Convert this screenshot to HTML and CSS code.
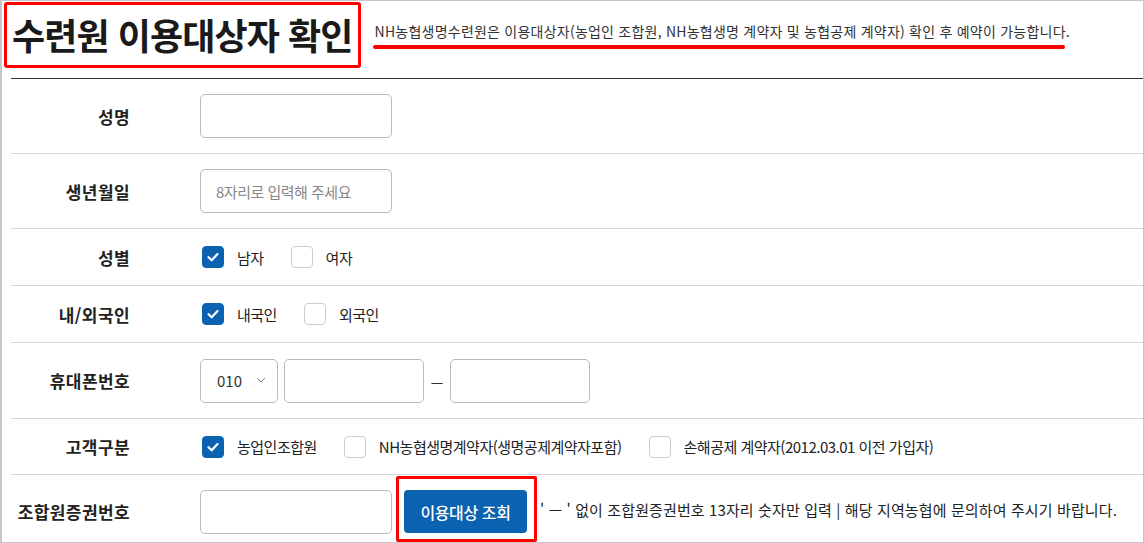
FILE: index.html
```html
<!DOCTYPE html>
<html lang="ko">
<head>
<meta charset="utf-8">
<title>수련원 이용대상자 확인</title>
<link rel="stylesheet" href="styles.css">
</head>
<body>
<div class="page">
  <header class="head">
    <h1 class="title">수련원 이용대상자 확인</h1>
    <div class="desc">
      <p class="desc-text">NH농협생명수련원은 이용대상자(농업인 조합원, NH농협생명 계약자 및 농협공제 계약자) 확인 후 예약이 가능합니다.</p>
      <div class="desc-line"></div>
    </div>
  </header>

  <div class="form">
    <div class="row row-tall">
      <div class="label">성명</div>
      <div class="field"><input class="input input-md" type="text"></div>
    </div>
    <div class="row row-tall">
      <div class="label">생년월일</div>
      <div class="field"><input class="input input-md" type="text" placeholder="8자리로 입력해 주세요"></div>
    </div>
    <div class="row row-short">
      <div class="label">성별</div>
      <div class="field">
        <label class="opt"><span class="cb cb-on"><svg viewBox="0 0 22 22" width="22" height="22"><path d="M6.5 11.2l3.2 3.1 5.8-6.2" fill="none" stroke="#fff" stroke-width="2.2" stroke-linecap="round" stroke-linejoin="round"/></svg></span><span class="opt-text">남자</span></label>
        <label class="opt"><span class="cb"></span><span class="opt-text">여자</span></label>
      </div>
    </div>
    <div class="row row-short">
      <div class="label">내/외국인</div>
      <div class="field">
        <label class="opt"><span class="cb cb-on"><svg viewBox="0 0 22 22" width="22" height="22"><path d="M6.5 11.2l3.2 3.1 5.8-6.2" fill="none" stroke="#fff" stroke-width="2.2" stroke-linecap="round" stroke-linejoin="round"/></svg></span><span class="opt-text">내국인</span></label>
        <label class="opt"><span class="cb"></span><span class="opt-text">외국인</span></label>
      </div>
    </div>
    <div class="row row-phone">
      <div class="label">휴대폰번호</div>
      <div class="field">
        <div class="select"><span>010</span><svg class="chev" viewBox="0 0 10 6" width="10" height="6"><path d="M1 1l4 4 4-4" fill="none" stroke="#888" stroke-width="1"/></svg></div>
        <input class="input input-ph1" type="text">
        <span class="dash">—</span>
        <input class="input input-ph2" type="text">
      </div>
    </div>
    <div class="row row-type">
      <div class="label">고객구분</div>
      <div class="field">
        <label class="opt"><span class="cb cb-on"><svg viewBox="0 0 22 22" width="22" height="22"><path d="M6.5 11.2l3.2 3.1 5.8-6.2" fill="none" stroke="#fff" stroke-width="2.2" stroke-linecap="round" stroke-linejoin="round"/></svg></span><span class="opt-text">농업인조합원</span></label>
        <label class="opt"><span class="cb"></span><span class="opt-text">NH농협생명계약자(생명공제계약자포함)</span></label>
        <label class="opt"><span class="cb"></span><span class="opt-text">손해공제 계약자(2012.03.01 이전 가입자)</span></label>
      </div>
    </div>
    <div class="row row-last">
      <div class="label">조합원증권번호</div>
      <div class="field field-last">
        <input class="input input-md input-card" type="text">
        <div class="mark"><button class="btn" type="button">이용대상 조회</button></div>
        <p class="note">' — ' 없이 조합원증권번호 13자리 숫자만 입력 | 해당 지역농협에 문의하여 주시기 바랍니다.</p>
      </div>
    </div>
  </div>
</div>
</body>
</html>
```

FILE: styles.css
```css
* { box-sizing: border-box; margin: 0; padding: 0; }
html, body { width: 1144px; height: 543px; overflow: hidden; background: #fff; }
body {
  font-family: "Noto Sans CJK KR", "Noto Sans", sans-serif;
  color: #222;
}
.page {
  height: 543px;
  border: 1px solid #c6c6c6;
  border-left-width: 2px;
}

/* header */
.head {
  display: flex;
  align-items: flex-start;
  height: 77px;
}
.title {
  margin: 1px 0 0 2px;
  height: 66px;
  border: 3px solid #ff0000;
  border-radius: 3px;
  padding: 0 5px;
  font-size: 36px;
  font-weight: 700;
  line-height: 58px;
  color: #1a1a1a;
  letter-spacing: -0.9px;
  white-space: nowrap;
}
.desc {
  margin-left: 12px;
  padding-top: 20px;
}
.desc-text {
  font-size: 14px;
  line-height: 20px;
  color: #333;
  padding-left: 2px;
  letter-spacing: 0.23px;
  white-space: nowrap;
}
.desc-line {
  width: 692px;
  height: 4px;
  margin-top: 4px;
  background: #ff0000;
  border-radius: 2px;
}

/* form */
.form {
  margin-left: 9px;
  border-top: 1px solid #333;
}
.row {
  display: flex;
  align-items: center;
  border-bottom: 1px solid #d3d6da;
}
.row-tall { height: 75px; }
.row-short { height: 57px; }
.row-phone { height: 76px; }
.row-type { height: 56px; }
.row-last { height: 67px; border-bottom: none; align-items: stretch; }

.label {
  width: 119px;
  text-align: right;
  font-size: 17px;
  font-weight: 700;
  color: #222;
  letter-spacing: 0.4px;
}
.row-last .label { align-self: center; padding-top: 6px; }
.field {
  padding-left: 70px;
  display: flex;
  align-items: center;
}

.input {
  height: 44px;
  border: 1px solid #b9b9b9;
  border-radius: 5px;
  background: #fff;
  font-family: inherit;
  font-size: 15px;
  padding: 0 15px;
  color: #333;
  outline: none;
}
.input::placeholder { color: #888; letter-spacing: -0.5px; }
.input-md { width: 192px; }
.input-ph1 { width: 140px; margin-left: 6px; }
.input-ph2 { width: 140px; }

.select {
  width: 78px;
  height: 44px;
  border: 1px solid #b9b9b9;
  border-radius: 5px;
  display: flex;
  align-items: center;
  padding-left: 16px;
  font-size: 15px;
  color: #333;
}
.chev { margin-left: 14px; margin-top: -2px; }
.dash {
  width: 26px;
  text-align: center;
  font-size: 14px;
  color: #333;
}

/* checkbox options */
.opt {
  display: flex;
  align-items: center;
  margin-right: 25px;
}
.cb {
  width: 22px;
  height: 22px;
  border: 1px solid #c9cdd1;
  border-radius: 4px;
  background: #fff;
  margin-left: 2px;
  display: flex;
}
.cb-on {
  background: #0b62b0;
  border-color: #0b62b0;
}
.cb-on svg { margin: -1px; }
.opt-text {
  margin-left: 13px;
  font-size: 15px;
  color: #222;
  letter-spacing: -0.5px;
  white-space: nowrap;
}

/* last row */
.field-last { align-items: flex-start; }
.input-card { margin-top: 15px; }
.mark {
  margin-left: 4px;
  margin-top: 1px;
  border: 3px solid #ff0000;
  border-radius: 2px;
  padding: 11px 7px 6px 5px;
}
.btn {
  display: block;
  width: 123px;
  height: 43px;
  border: none;
  border-radius: 4px;
  background: #0b62b0;
  color: #fff;
  font-family: inherit;
  font-size: 16px;
  font-weight: 500;
  letter-spacing: -0.4px;
}
.note {
  margin-left: 3px;
  margin-top: 25px;
  font-size: 15px;
  line-height: 20px;
  color: #222;
  letter-spacing: 0.12px;
  white-space: nowrap;
}
```
